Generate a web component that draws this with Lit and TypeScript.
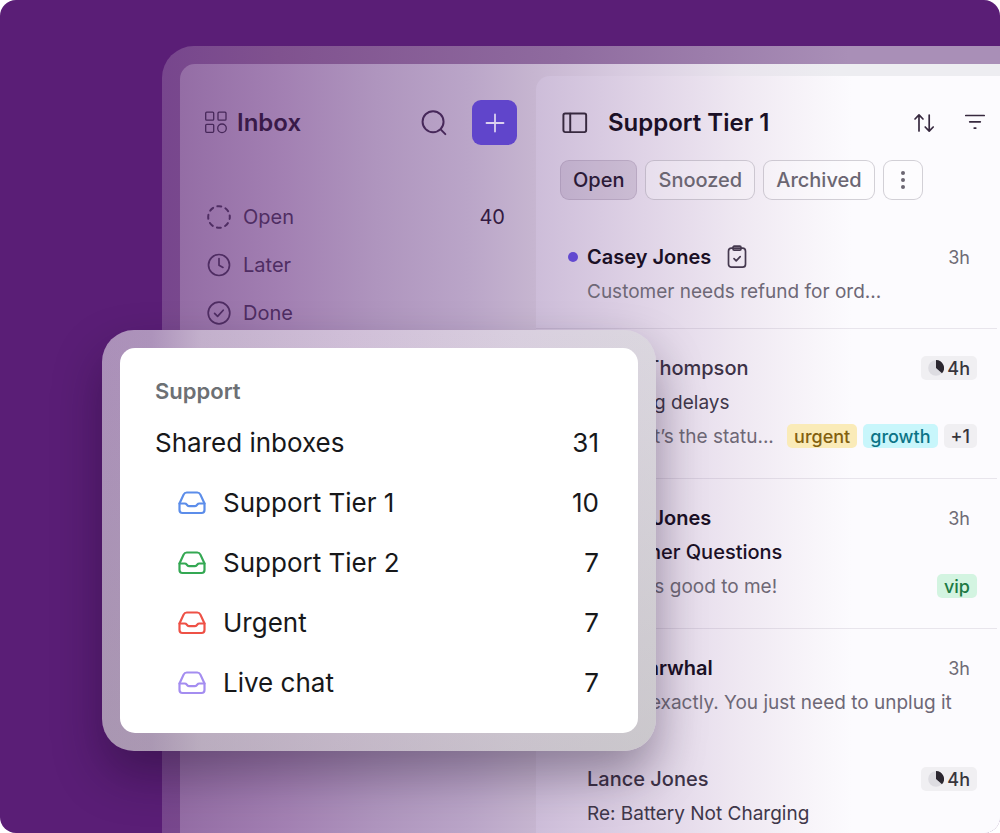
import { LitElement, html, css, svg, nothing } from "lit";
import { customElement } from "lit/decorators.js";
import { classMap } from "lit/directives/class-map.js";

type Tag = { label: string; tone: string };
type Message = {
  name: string;
  unread?: boolean;
  dot?: boolean;
  task?: boolean;
  subject?: string;
  preview?: string;
  time: string;
  sla?: boolean;
  tags?: Tag[];
  tall?: boolean;
  line?: boolean;
};

const stroke = (size: number, body: unknown, width = 1.6) => html`
  <svg width=${size} height=${size} viewBox="0 0 24 24" fill="none" stroke="currentColor"
    stroke-width=${width} stroke-linecap="round" stroke-linejoin="round" aria-hidden="true">${body}</svg>`;

const icons = {
  apps: stroke(24, svg`<rect x="1.7" y="1.2" width="8" height="8" rx="1"/><rect x="14" y="1.2" width="8" height="8" rx="1"/><rect x="1.7" y="13.3" width="8" height="8" rx="1"/><circle cx="18" cy="17.3" r="4.3"/>`, 1.3),
  search: stroke(28, svg`<circle cx="11.2" cy="10.9" r="9"/><path d="M17.7 17.5l4 4"/>`, 1.7),
  plus: stroke(24, svg`<path d="M12 3.5v17M3.5 12h17"/>`, 1.8),
  open: stroke(24, svg`<circle cx="12" cy="12" r="10.8" stroke-dasharray="4 4.482" stroke-dashoffset="2"/>`, 2),
  later: stroke(24, svg`<circle cx="12" cy="12" r="10.5"/><path d="M12 5.6v6.6l4 2.2"/>`, 1.7),
  done: stroke(24, svg`<circle cx="12" cy="12" r="10.8"/><path d="M7.6 12.4l3 3 5.6-6.2"/>`, 1.7),
  panel: stroke(26, svg`<rect x="1.3" y="3.2" width="21" height="17.2" rx="1.6"/><path d="M7.6 3.4v17"/>`, 1.8),
  sort: stroke(24, svg`<path d="M7 20V4M3 8l4-4.2L11 8M17.2 4v16M13.2 16l4 4.2 4-4.2"/>`, 1.7),
  filter: stroke(24, svg`<path d="M2.8 4.5h18.4M6.7 10.8h10.600M11.2 17.1h1.6"/>`, 1.7),
  clipboard: stroke(24, svg`<rect x="3.5" y="3.2" width="17" height="19" rx="3"/><rect x="8" y="1.2" width="8" height="4" rx="1.2"/><path d="M9 13.6l2.2 2.2 4-4.2"/>`, 1.7),
  inbox: html`<svg width="28" height="24" viewBox="0 0 28 24" fill="none" stroke="currentColor" stroke-width="2.2"
    stroke-linecap="round" stroke-linejoin="round" aria-hidden="true">
    <path d="M1.5 12.5 5.6 3.6Q6.6 1.5 8.8 1.5h10.4q2.2 0 3.2 2.1L26.5 12.5v6.5q0 3-3 3h-19q-3 0-3-3z"/>
    <path d="M1.5 12.5h5.2q1.2 0 2 1l.6.7q.8 1 2 1h5.4q1.2 0 2-1l.6-.7q.8-1 2-1h5.2"/></svg>`,
  pie: html`<svg width="16" height="16" viewBox="0 0 16 16" aria-hidden="true">
    <circle cx="8" cy="8" r="7.800" fill="#dddce1"/><path d="M8 8V0a8 8 0 0 1 6 13.300z" fill="#2b2730"/></svg>`,
};

@customElement("status-list")
class StatusList extends LitElement {
  static styles = css`
    :host { display: block; }
    ul { list-style: none; margin: 0; padding: 0; }
    .row {
      display: flex; align-items: center; gap: 12px; height: 48px; padding: 0 12px 0 3px;
      color: #4f2d63; text-decoration: none; font-size: 20px; line-height: 24px;
    }
    .label { flex: 1; }
    .count { color: #331a41; }
    svg { display: block; }
  `;
  render() {
    const rows = [
      { label: "Open", icon: icons.open, count: "40" },
      { label: "Later", icon: icons.later, count: "" },
      { label: "Done", icon: icons.done, count: "" },
    ];
    return html`<ul>
      ${rows.map((r) => html`<li><a class="row" href="#">${r.icon}<span class="label">${r.label}</span><span class="count">${r.count}</span></a></li>`)}
    </ul>`;
  }
}

@customElement("message-list")
class MessageList extends LitElement {
  static styles = css`
    :host { display: block; }
    .item {
      display: grid; grid-template-columns: 10px minmax(0, 1fr); column-gap: 9px;
      margin-right: 3px; padding: 22px 20px 20px 32px; box-sizing: border-box;
      border-bottom: 1px solid transparent; min-height: 111px;
    }
    .tall { min-height: 150px; }
    .ruled { border-bottom-color: rgba(90, 70, 110, 0.12); }
    .dot { width: 10px; height: 10px; border-radius: 50%; background: #6249d0; margin-top: 12px; }
    .body { grid-column: 2; min-width: 0; }
    .line { display: flex; align-items: center; height: 34px; white-space: nowrap; font-size: 19px; }
    .name { font-size: 20px; font-weight: 500; color: #3d3247; }
    .unread .name { font-weight: 600; color: #1b1026; }
    .subject { color: #40374a; }
    .unread .subject { font-size: 20px; font-weight: 500; color: #1b1026; }
    .preview { color: #6e6876; min-width: 0; overflow: hidden; text-overflow: ellipsis; }
    .task { display: flex; margin-left: 14px; color: #45394f; }
    .end { margin-left: auto; display: flex; gap: 6px; }
    .time { padding: 0 7px; color: #6f6b75; font-size: 18px; }
    .tag {
      display: flex; align-items: center; gap: 3px; height: 24px; padding: 0 7px; border-radius: 5px;
      font-size: 18px; font-weight: 500;
    }
    .gray { background: #f0eff2; color: #38353c; }
    .yellow { background: #faebb8; color: #82600f; }
    .cyan { background: #c8f6fb; color: #0b7486; }
    .green { background: #d3f4e1; color: #1d7a44; }
    svg { display: block; }
  `;
  messages: Message[] = [
    { name: "Casey Jones", unread: true, dot: true, task: true, preview: "Customer needs refund for ord...", time: "3h", line: true },
    { name: "Maria Thompson", subject: "Shipping delays", preview: "Hi, what’s the statu...", time: "4h", sla: true, tall: true, line: true,
      tags: [{ label: "urgent", tone: "yellow" }, { label: "growth", tone: "cyan" }, { label: "+1", tone: "gray" }] },
    { name: "Casey Jones", unread: true, subject: "Customer Questions", preview: "Hi, looks good to me!", time: "3h", tall: true, line: true,
      tags: [{ label: "vip", tone: "green" }] },
    { name: "Lina Narwhal", unread: true, preview: "Super, exactly. You just need to unplug it", time: "3h" },
    { name: "Lance Jones", subject: "Re: Battery Not Charging", time: "4h", sla: true },
  ];
  render() {
    return html`${this.messages.map((m) => html`
      <article class=${classMap({ item: true, unread: !!m.unread, tall: !!m.tall, ruled: !!m.line })}>
        ${m.dot ? html`<span class="dot"></span>` : nothing}
        <div class="body">
          <div class="line">
            <span class="name">${m.name}</span>
            ${m.task ? html`<span class="task">${icons.clipboard}</span>` : nothing}
            <span class="end">${m.sla ? html`<span class="tag gray">${icons.pie}${m.time}</span>` : html`<span class="time">${m.time}</span>`}</span>
          </div>
          ${m.subject ? html`<div class="line"><span class="subject">${m.subject}</span></div>` : nothing}
          ${m.preview ? html`<div class="line"><span class="preview">${m.preview}</span>
            ${m.tags ? html`<span class="end">${m.tags.map((t) => html`<span class="tag ${t.tone}">${t.label}</span>`)}</span>` : nothing}</div>` : nothing}
        </div>
      </article>`)}`;
  }
}

@customElement("inbox-card")
class InboxCard extends LitElement {
  static styles = css`
    :host {
      display: block; box-sizing: border-box; padding: 18px; border-radius: 32px;
      background:
        linear-gradient(180deg, rgba(170, 170, 165, 0) 0, rgba(165, 165, 160, 0.3) 100%),
        linear-gradient(90deg, #ab90b9 0, #ad93bb 9%, #c3b0cc 18%, #d0bfd8 45%, #d9cfdf 75%, #dbd7df 100%);
      box-shadow: 0 24px 48px rgba(20, 5, 30, 0.36);
    }
    .card { background: #fff; border-radius: 15px; padding: 25px 39px 20px 35px; color: #17181a; }
    h2 { margin: 0 0 4px; font-size: 22px; line-height: 36px; font-weight: 600; color: #6c7074; }
    ul { list-style: none; margin: 0; padding: 0; }
    .row {
      display: flex; align-items: center; height: 60px; font-size: 26px; line-height: 32px;
      color: inherit; text-decoration: none;
    }
    .child { padding-left: 23px; gap: 17px; }
    .label { flex: 1; }
    .blue { color: #5c8dea; }
    .green { color: #34a853; }
    .red { color: #ee5146; }
    .violet { color: #a48df0; }
    svg { display: block; }
  `;
  render() {
    const rows = [
      ["Support Tier 1", "10", "blue"],
      ["Support Tier 2", "7", "green"],
      ["Urgent", "7", "red"],
      ["Live chat", "7", "violet"],
    ];
    return html`<section class="card">
      <h2>Support</h2>
      <a class="row" href="#"><span class="label">Shared inboxes</span><span>31</span></a>
      <ul>
        ${rows.map(([label, count, tone]) => html`<li><a class="row child" href="#"><span class=${tone}>${icons.inbox}</span><span class="label">${label}</span><span>${count}</span></a></li>`)}
      </ul>
    </section>`;
  }
}

@customElement("app-root")
class AppRoot extends LitElement {
  static styles = css`
    :host { display: block; height: 100vh; background: #fff; font-family: Inter, "Liberation Sans", sans-serif; }
    .stage {
      position: relative; box-sizing: border-box; height: 100%; padding: 46px 0 0 162px;
      overflow: hidden; border-radius: 16px; background: #5a1e76;
    }
    .frame {
      box-sizing: border-box; height: 100%; padding: 18px 0 0 18px; border-radius: 32px 0 0 0;
      background: linear-gradient(90deg, #77468d 0, #80528f 14%, #8f6b9f 48%, #a98fb7 82%, #a98fb7 100%);
    }
    .window {
      display: grid; grid-template-columns: 356px minmax(0, 1fr); height: 100%;
      border-radius: 15px 0 0 0; overflow: hidden;
      background: linear-gradient(90deg, #946da5 0, #a27fb2 12%, #af95be 24%, #baa5c8 35%, #c6b5d0 43%, #d8cbe0 54%, #e9e4ed 68%, #ededf1 80%);
    }
    .side { padding: 36px 19px 0 24px; }
    .side-head { display: flex; align-items: center; margin-bottom: 48px; color: #47285a; }
    .side-head h1 { flex: 1; margin: 0 0 0 9px; font-size: 24px; line-height: 32px; font-weight: 600; color: #391a49; }
    .main {
      margin-top: 12px; border-radius: 14px 0 0 0; padding-top: 26px;
      background: linear-gradient(90deg, #cdbdd9 0, #d8cae1 14%, #e3d8e9 28%, #efe8f2 44%, #f6f2f8 56%, #fcfbfe 68%, #fcfbfe 100%);
    }
    .head { display: flex; align-items: center; height: 42px; padding: 0 13px 0 26px; color: #37293f; }
    .head h1 { flex: 1; margin: 0 0 0 20px; font-size: 24px; line-height: 32px; font-weight: 600; color: #1b1026; }
    .tools { display: flex; gap: 27px; }
    .filters { display: flex; gap: 8px; padding: 16px 0 18px 24px; }
    button { font: inherit; margin: 0; cursor: pointer; }
    .icon { display: flex; padding: 0; border: 0; background: none; color: inherit; }
    .search { margin-right: 24px; }
    .add {
      display: flex; align-items: center; justify-content: center; width: 45px; height: 45px; padding: 0;
      border: 0; border-radius: 9px; background: #6045cb; color: #dcd2f0;
    }
    .chip {
      display: flex; align-items: center; justify-content: center; box-sizing: border-box; height: 40px;
      padding: 0 12px; border: 1px solid rgba(90, 80, 100, 0.26); border-radius: 9px;
      background: rgba(255, 255, 255, 0.25); color: #6b6672; font-size: 20px; font-weight: 500;
    }
    .active { background: rgba(75, 50, 90, 0.13); border-color: rgba(75, 50, 90, 0.14); color: #2b1a37; }
    .more { width: 40px; padding: 0; }
    .popup { position: absolute; left: 102px; top: 330px; width: 554px; }
    svg { display: block; }
  `;
  render() {
    return html`<div class="stage">
      <div class="frame">
        <div class="window">
          <nav class="side">
            <div class="side-head">
              ${icons.apps}
              <h1>Inbox</h1>
              <button class="icon search" aria-label="Search">${icons.search}</button>
              <button class="add" aria-label="New conversation">${icons.plus}</button>
            </div>
            <status-list></status-list>
          </nav>
          <main class="main">
            <header class="head">
              <button class="icon" aria-label="Toggle sidebar">${icons.panel}</button>
              <h1>Support Tier 1</h1>
              <div class="tools">
                <button class="icon" aria-label="Sort">${icons.sort}</button>
                <button class="icon" aria-label="Filter">${icons.filter}</button>
              </div>
            </header>
            <div class="filters">
              <button class="chip active">Open</button>
              <button class="chip">Snoozed</button>
              <button class="chip">Archived</button>
              <button class="chip more" aria-label="More filters">
                <svg width="6" height="20" viewBox="0 0 6 20" fill="currentColor" aria-hidden="true">
                  <circle cx="3" cy="3" r="2"/><circle cx="3" cy="10" r="2"/><circle cx="3" cy="17" r="2"/>
                </svg>
              </button>
            </div>
            <message-list></message-list>
          </main>
        </div>
      </div>
      <inbox-card class="popup"></inbox-card>
    </div>`;
  }
}
